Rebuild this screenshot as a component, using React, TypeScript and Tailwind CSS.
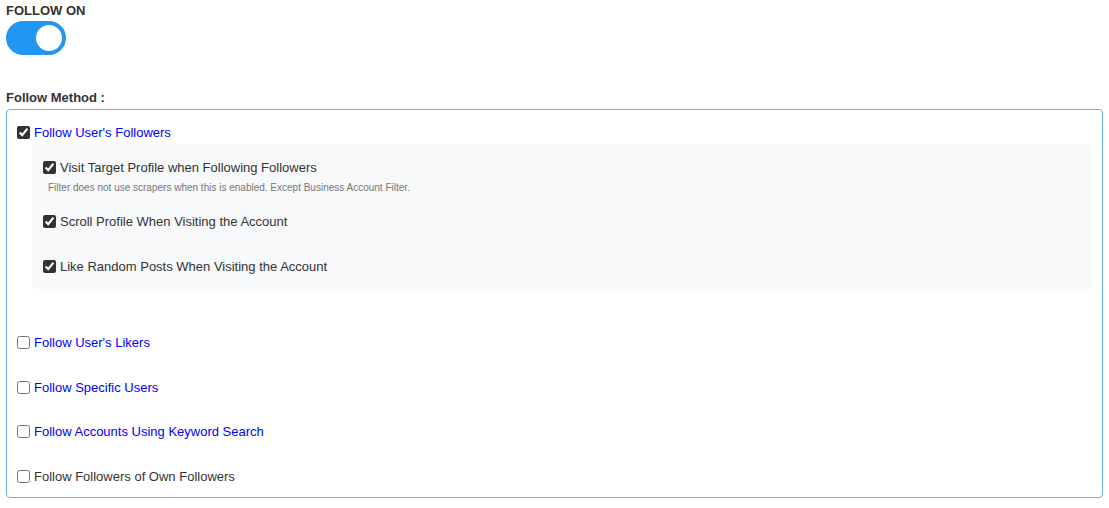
import React from "react";

function Row({
  label,
  checked,
  blue,
  className = "",
}: {
  label: string;
  checked?: boolean;
  blue?: boolean;
  className?: string;
}) {
  return (
    <label className={`flex h-[20px] items-center gap-[4px] ${className}`}>
      <input
        type="checkbox"
        defaultChecked={checked}
        className="m-0 h-[13px] w-[13px] accent-[#333333]"
      />
      <span className={blue ? "text-[#0000ff]" : "text-[#333333]"}>{label}</span>
    </label>
  );
}

export default function App() {
  return (
    <div
      className="min-h-[508px] w-[1109px] bg-white px-[6px] text-[13px] leading-[15px] text-[#333333]"
      style={{ fontFamily: '"Liberation Sans", Arial, sans-serif' }}
    >
      <div className="pt-[3px] font-bold">FOLLOW ON</div>
      <div className="mt-[3px] flex h-[34px] w-[60px] items-center rounded-full bg-[#2196f3] px-[4px]">
        <div className="ml-[26px] h-[26px] w-[26px] rounded-full bg-white" />
      </div>
      <div className="mt-[35px] font-bold">Follow Method :</div>
      <div className="mt-[4px] rounded-[4px] border border-[#6ab0f0] pb-[11px] pl-[10px] pr-[10px] pt-[12px]">
        <Row label="Follow User's Followers" checked blue />
        <div className="ml-[15px] mt-[2px] rounded-[5px] bg-[#f8f9fa] pb-[13px] pl-[11px] pt-[13px]">
          <Row label="Visit Target Profile when Following Followers" checked />
          <div className="mt-[5px] h-[12px] pl-[5px] text-[10px] leading-[12px] text-[#777777]">
            Filter does not use scrapers when this is enabled. Except Business Account Filter.
          </div>
          <Row className="mt-[17px]" label="Scroll Profile When Visiting the Account" checked />
          <Row className="mt-[25px]" label="Like Random Posts When Visiting the Account" checked />
        </div>
        <Row className="mt-[43px]" label="Follow User's Likers" blue />
        <Row className="mt-[25px]" label="Follow Specific Users" blue />
        <Row className="mt-[24px]" label="Follow Accounts Using Keyword Search" blue />
        <Row className="mt-[25px]" label="Follow Followers of Own Followers" />
      </div>
    </div>
  );
}
